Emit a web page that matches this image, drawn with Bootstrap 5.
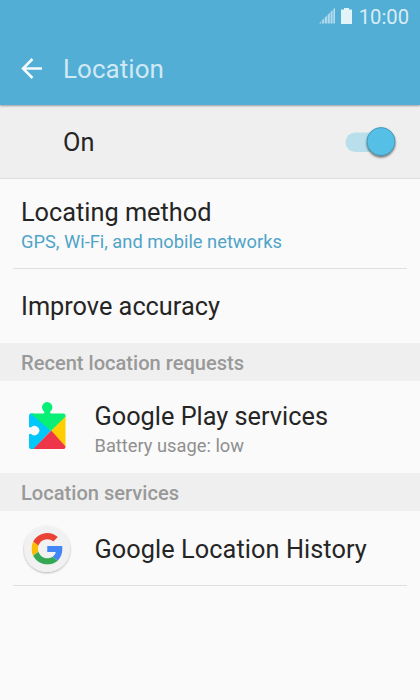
<!DOCTYPE html>
<html lang="en">
<head>
<meta charset="utf-8">
<meta name="viewport" content="width=device-width, initial-scale=1">
<title>Location</title>
<link href="https://cdn.jsdelivr.net/npm/bootstrap@5.3.0/dist/css/bootstrap.min.css" rel="stylesheet">
<style>
body{font-family:Roboto,"Liberation Sans",sans-serif;background:#fafafa;color:#252525;height:700px;overflow:hidden}
.top{background:#52aed5;height:105px;box-shadow:0 1px 2px rgba(0,0,0,.35);position:relative}
.status{height:33px;padding:0 11px 1px 0;color:#d8edf6;font-size:20.2px;line-height:32px}
.clock{margin-left:5px;padding-top:1px}
.page-title{font-size:26px;line-height:30px;color:#d0e9f4;margin-left:20px;letter-spacing:.05px}
.title-bar{height:72px;padding:0 0 0 21px}
.switch-row{background:#efefef;height:74px;border-bottom:1px solid #dedede;padding:0 22px 0 63px}
.switch-row .main-text{padding-top:2px}
.main-text{font-size:25.3px;line-height:28px;white-space:nowrap}
.sub-text{font-size:18.3px;line-height:22px;white-space:nowrap}
.blue{color:#4fa4c7}
.gray{color:#8f8f8f}
.toggle{width:56px;height:38px}
.section{background:#efefef;color:#999;height:38px;font-size:20.1px;font-weight:500;line-height:38px;padding:1px 21px 0}
.line{height:1px;background:#dfdfdf;margin:0 13px}
.r1{height:89px;padding:20px 21px 0}
.r1 .sub-text,.r3 .sub-text{padding-top:4px}
.r2{height:74px;padding:2px 21px 0}
.r3{height:92px;padding-left:21px}
.r3 .label{padding-top:5px}
.r4{height:74px;padding-left:21px}
.r4 .label{padding-top:3px;letter-spacing:.07px}
.app-icon{width:52px;height:56px;flex:none}
.label{margin-left:21.500px}
</style>
<script src="https://cdn.jsdelivr.net/npm/bootstrap@5.3.0/dist/js/bootstrap.bundle.min.js"></script>
</head>
<body>
<header class="top">
  <div class="status d-flex justify-content-end align-items-center">
    <svg width="17" height="16" viewBox="0 0 17 16" fill="#b4dbec"><path d="M0 15.500l2-2v2zM2.800 12.700l2.100-2.100v4.900H2.800zM5.700 9.800l2.200-2.200v7.900H5.700zM8.600 6.900l2.200-2.200v10.800H8.600zM11.500 4l2.100-2.100v13.600h-2.100zM14.300 1.200L16 0v15.500h-1.700z"/></svg>
    <svg class="ms-1" width="14" height="16" viewBox="0 0 14 16" fill="#e3f3fa"><path d="M4 0h5v1.500h3V16H1V1.500h3z"/></svg>
    <span class="clock">10:00</span>
  </div>
  <div class="title-bar d-flex align-items-center">
    <svg width="22" height="22" viewBox="0 0 22 22" fill="none" stroke="#f5fbfd" stroke-width="2.500"><path d="M21 10.500H2M11.500 1L2 10.500l9.500 9.500"/></svg>
    <h1 class="page-title fw-normal mb-0">Location</h1>
  </div>
</header>
<main>
  <div class="switch-row d-flex align-items-center justify-content-between">
    <span class="main-text">On</span>
    <svg class="toggle" viewBox="0 0 56 38">
      <defs><filter id="s" x="-30%" y="-30%" width="160%" height="170%"><feDropShadow dx="0" dy="1.500" stdDeviation="1" flood-opacity=".6"/></filter></defs>
      <rect x="3.500" y="9.500" width="46" height="19.500" rx="9.750" fill="#b9dfed"/>
      <circle cx="39" cy="18.500" r="14" fill="#56bfe6" stroke="#3d8fb0" stroke-width=".8" filter="url(#s)"/>
    </svg>
  </div>
  <div class="r1">
    <div class="main-text"><span>Locating method</span></div>
    <div class="sub-text blue"><span>GPS, Wi-Fi, and mobile networks</span></div>
  </div>
  <div class="line"></div>
  <div class="r2 d-flex align-items-center"><span class="main-text">Improve accuracy</span></div>
  <div class="section"><span>Recent location requests</span></div>
  <div class="r3 d-flex align-items-center">
    <svg class="app-icon" viewBox="21 399 52 56">
      <defs><clipPath id="p"><path d="M31 413.500h12.500c1-.6 1-1.500.4-2.300a5.200 5.200 0 1 1 6.600 0c-.6.800-.6 1.700.4 2.300H63.500q2 0 2 2V447q0 2-2 2H31q-2 0-2-2v-12.500c.6-1 1.500-1 2.500-.3a4.700 4.700 0 1 0 0-7.200c-1 .7-1.900.7-2.500-.3V415.500q0-2 2-2z"/></clipPath></defs>
      <g clip-path="url(#p)"><path fill="#00c8fa" d="M28 412h4l19 18.500L34 449l-1 1h-5z"/><path fill="#08ef76" d="M30 400h37v16L51.200 431 29.500 412.500z"/><path fill="#ffce00" d="M67 415v34L51 431z"/><path fill="#ef3549" d="M32.500 450L51.200 430.500 66 447v3z"/></g>
    </svg>
    <div class="label">
      <div class="main-text"><span>Google Play services</span></div>
      <div class="sub-text gray"><span>Battery usage: low</span></div>
    </div>
  </div>
  <div class="section"><span>Location services</span></div>
  <div class="r4 d-flex align-items-center">
    <svg class="app-icon" viewBox="0 0 52 56">
      <defs><filter id="g" x="-20%" y="-20%" width="140%" height="140%"><feDropShadow dx="0" dy="1" stdDeviation="1" flood-opacity=".3"/></filter></defs>
      <circle cx="26" cy="29" r="23" fill="#f1f1f1" filter="url(#g)"/>
      <svg x="10.500" y="12.700" width="31.500" height="32" viewBox="0 0 48 48">
        <path fill="#ea4335" d="M24 9.500c3.540 0 6.710 1.220 9.210 3.600l6.850-6.850C35.900 2.380 30.470 0 24 0 14.620 0 6.510 5.380 2.560 13.220l7.980 6.190C12.430 13.720 17.740 9.500 24 9.500z"/>
        <path fill="#4285f4" d="M46.980 24.550c0-1.570-.15-3.090-.38-4.550H24v9.020h12.940c-.58 2.960-2.260 5.480-4.780 7.180l7.730 6c4.510-4.180 7.090-10.360 7.090-17.650z"/>
        <path fill="#fbbc05" d="M10.530 28.590c-.48-1.450-.76-2.990-.76-4.590s.27-3.140.76-4.590l-7.980-6.190C.92 16.460 0 20.120 0 24c0 3.880.92 7.540 2.560 10.780l7.970-6.190z"/>
        <path fill="#34a853" d="M24 48c6.480 0 11.930-2.130 15.890-5.810l-7.730-6c-2.150 1.450-4.920 2.300-8.160 2.300-6.260 0-11.570-4.220-13.470-9.910l-7.980 6.190C6.510 42.620 14.620 48 24 48z"/>
      </svg>
    </svg>
    <div class="label main-text"><span>Google Location History</span></div>
  </div>
  <div class="line"></div>
</main>
</body>
</html>
